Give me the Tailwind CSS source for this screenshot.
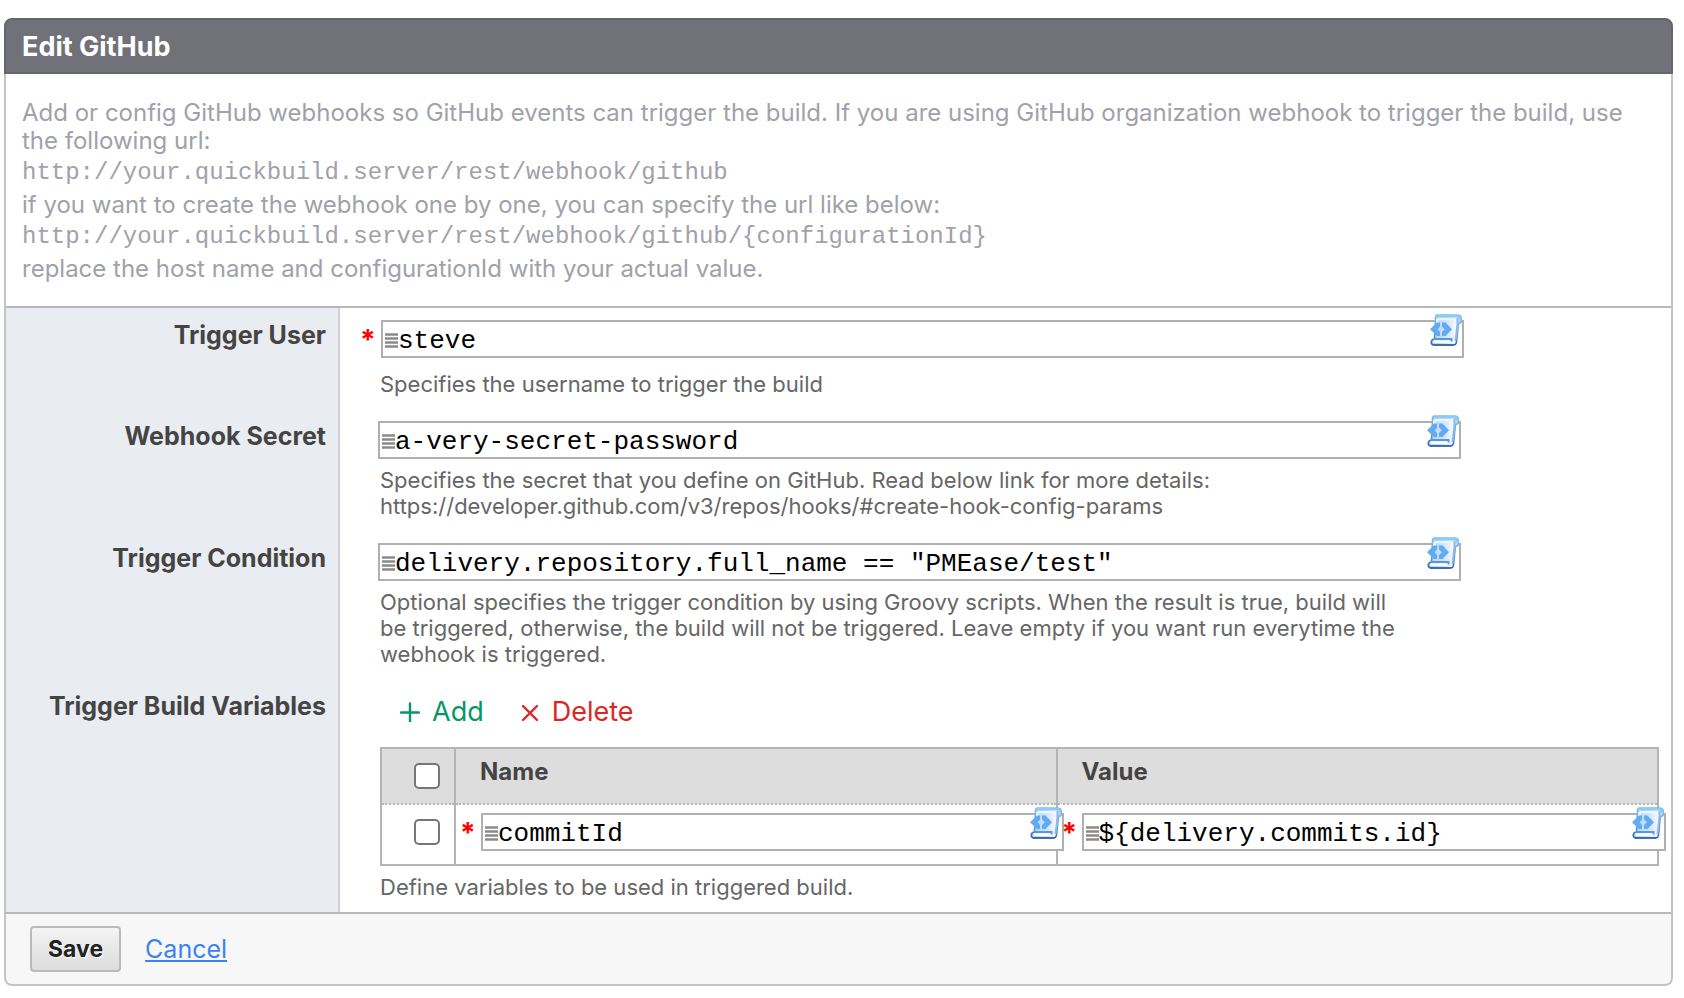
<!DOCTYPE html>
<html lang="en">
<head>
<meta charset="utf-8">
<meta name="viewport" content="width=device-width, initial-scale=1">
<title>Edit GitHub</title>
<script src="https://cdn.jsdelivr.net/npm/@tailwindcss/browser@4"></script>
</head>
<body class="bg-white font-['Inter',sans-serif] text-[#444]">
<svg class="absolute size-0" aria-hidden="true">
  <defs>
    <linearGradient id="paper" x1="0" y1="0" x2="1" y2="0">
      <stop offset="0" stop-color="#a5cff5"/><stop offset=".55" stop-color="#d3e7fc"/><stop offset=".8" stop-color="#f4f9ff"/><stop offset="1" stop-color="#9cc6f2"/>
    </linearGradient>
    <linearGradient id="edge" x1="0" y1="0" x2="0" y2="1">
      <stop offset="0" stop-color="#79c0ee"/><stop offset=".6" stop-color="#6a9fdc"/><stop offset="1" stop-color="#3463a6"/>
    </linearGradient>
    <symbol id="script" viewBox="0 0 32 32">
      <path d="M7 1h20.500c2.800 0 4.200 2 4.200 4.500S30.500 9.500 28.500 9.500L26.500 28c-.3 2-1.300 3-3 3H4c-2 0-3-1.500-2.700-3.200S3 25 4.500 25L5.500 4C5.600 2 6 1 7 1z" fill="url(#paper)" stroke="url(#edge)" stroke-width="1.600"/>
      <path d="M7.500 5h17M7.500 5v4" fill="none" stroke="#eaf5fe" stroke-width="2.500"/>
      <path d="M7 2.200h20c2 0 3.300 1.300 3.300 3.300" fill="none" stroke="#8cccf4" stroke-width="2.400"/>
      <path d="M27.500 4v6l-2 17" fill="none" stroke="#8fb9ea" stroke-width="2"/>
      <path d="M3.500 26.300h17.500v2.700H3.500z" fill="#fff"/>
      <path d="M4 25h17.500v2.500" fill="none" stroke="#5a97de" stroke-width="2"/>
      <path d="M3 31h21" stroke="#3a68a8" stroke-width="1.600"/>
      <path d="M0 15.300L7 8.500h3v4l-2.500 2.800L10 18v4H7zM12 8.500h3.500l6.500 6.800-6.500 6.700H12v-4l2.800-2.700L12 12.500z" fill="#62aaf2"/>
    </symbol>
    <symbol id="grip" viewBox="0 0 13 16">
      <path d="M0 1.500h13M0 5.500h13M0 9.500h13M0 13.500h13" stroke="#8a8a8a" stroke-width="2.400"/>
    </symbol>
  </defs>
</svg>

<form class="mt-[18px] mr-[11px] ml-1">
  <h1 class="flex h-14 items-center rounded-t-lg border-2 border-[#65656b] bg-[#71717a] px-4 pt-0.5 text-[27px] font-bold text-white">Edit GitHub</h1>

  <div class="border-x-2 border-[#c4c4c4]">
    <div class="border-b-2 border-[#b9b9b9] px-4 pt-[25px] pb-[21px] text-[24px] leading-8 text-[#a1a1aa]">
      <p class="mb-0.5 leading-7">Add or config GitHub webhooks so GitHub events can trigger the build. If you are using GitHub organization webhook to trigger the build, use the following url:</p>
      <code class="block font-['Liberation_Mono',monospace]">http://your.quickbuild.server/rest/webhook/github</code>
      <p>if you want to create the webhook one by one, you can specify the url like below:</p>
      <code class="block font-['Liberation_Mono',monospace]">http://your.quickbuild.server/rest/webhook/github/{configurationId}</code>
      <p>replace the host name and configurationId with your actual value.</p>
    </div>

    <div class="grid grid-cols-[334px_minmax(0,1fr)]">
      <label for="user" class="border-r-2 border-[#d0d0d5] bg-[#e9ecf1] pt-3 pr-3 text-right text-[25px] leading-[30px] font-bold">Trigger User</label>
      <div class="pt-3 pb-3">
        <div class="flex pl-5">
          <span class="w-[21px] pt-1.5 text-[28px] leading-7 font-bold text-[#f00]">*</span>
          <div class="relative w-full max-w-[1083px]">
            <input id="user" value="steve" class="block h-[38px] w-full border-2 border-[#b0b0b0] bg-white pt-[5px] pl-[15px] font-['Liberation_Mono',monospace] text-[26px] text-black">
            <svg class="absolute top-[13px] left-1 h-4 w-[13px]"><use href="#grip"/></svg>
            <button type="button" aria-label="Insert script" class="absolute -top-1.5 right-0.5"><svg class="size-8"><use href="#script"/></svg></button>
          </div>
        </div>
        <p class="mt-[13px] pl-10 text-[22px] leading-[26px] text-[#666]">Specifies the username to trigger the build</p>
      </div>

      <label for="secret" class="border-r-2 border-[#d0d0d5] bg-[#e9ecf1] pt-3 pr-3 text-right text-[25px] leading-[30px] font-bold">Webhook Secret</label>
      <div class="pt-3 pb-3">
        <div class="flex pl-[38px]">
          <div class="relative w-full max-w-[1083px]">
            <input id="secret" value="a-very-secret-password" class="block h-[38px] w-full border-2 border-[#b0b0b0] bg-white pt-[5px] pl-[15px] font-['Liberation_Mono',monospace] text-[26px] text-black">
            <svg class="absolute top-[13px] left-1 h-4 w-[13px]"><use href="#grip"/></svg>
            <button type="button" aria-label="Insert script" class="absolute -top-1.5 right-0.5"><svg class="size-8"><use href="#script"/></svg></button>
          </div>
        </div>
        <p class="mt-2 pl-10 text-[22px] leading-[26px] text-[#666]">Specifies the secret that you define on GitHub. Read below link for more details:<br>https://developer.github.com/v3/repos/hooks/#create-hook-config-params</p>
      </div>

      <label for="condition" class="border-r-2 border-[#d0d0d5] bg-[#e9ecf1] pt-3 pr-3 text-right text-[25px] leading-[30px] font-bold">Trigger Condition</label>
      <div class="pt-3 pb-3">
        <div class="flex pl-[38px]">
          <div class="relative w-full max-w-[1083px]">
            <input id="condition" value="delivery.repository.full_name == &quot;PMEase/test&quot;" class="block h-[38px] w-full border-2 border-[#b0b0b0] bg-white pt-[5px] pl-[15px] font-['Liberation_Mono',monospace] text-[26px] text-black">
            <svg class="absolute top-[13px] left-1 h-4 w-[13px]"><use href="#grip"/></svg>
            <button type="button" aria-label="Insert script" class="absolute -top-1.5 right-0.5"><svg class="size-8"><use href="#script"/></svg></button>
          </div>
        </div>
        <p class="mt-2 pl-10 text-[22px] leading-[26px] text-[#666]">Optional specifies the trigger condition by using Groovy scripts. When the result is true, build will<br>be triggered, otherwise, the build will not be triggered. Leave empty if you want run everytime the<br>webhook is triggered.</p>
      </div>

      <div class="border-r-2 border-[#d0d0d5] bg-[#e9ecf1] pt-3 pr-3 text-right text-[25px] leading-[30px] font-bold">Trigger Build Variables</div>
      <div class="pt-[15px] pr-3 pb-3 pl-10">
        <div class="flex gap-9 pl-5 text-[27px] leading-9">
          <button type="button" class="flex items-center gap-3 text-[#059669]"><svg class="size-5" viewBox="0 0 20 20"><path d="M10 1.500v18M1 10.500h18" stroke="currentColor" stroke-width="2.400" stroke-linecap="round"/></svg>Add</button>
          <button type="button" class="flex items-center gap-3 text-[#dc2626]"><svg class="size-5" viewBox="0 0 20 20"><path d="M3 4l14 14M17 4L3 18" stroke="currentColor" stroke-width="2.400" stroke-linecap="round"/></svg>Delete</button>
        </div>
        <table class="mt-[17px] w-full table-fixed border-collapse border-2 border-[#b4b4b4]">
          <colgroup><col class="w-[74px]"><col><col></colgroup>
          <thead>
            <tr class="h-14 border-b-2 border-dotted border-[#b4b4b4] bg-[#ddd] text-left align-top text-[24px] leading-7">
              <th class="border-x-2 border-x-[#b4b4b4] [border-left-style:solid] [border-right-style:solid]"><input type="checkbox" aria-label="Select all" class="mt-3.5 ml-8 block size-[26px] appearance-none rounded-[5px] border-2 border-[#767676] bg-white"></th>
              <th class="border-r-2 border-r-[#b4b4b4] pt-[9px] pl-6 [border-right-style:solid]">Name</th>
              <th class="border-r-2 border-r-[#b4b4b4] pt-[9px] pl-6 [border-right-style:solid]">Value</th>
            </tr>
          </thead>
          <tbody>
            <tr class="h-[61px] align-top">
              <td class="border-r-2 border-[#b4b4b4]"><input type="checkbox" aria-label="Select commitId" class="mt-3.5 ml-8 block size-[26px] appearance-none rounded-[5px] border-2 border-[#767676] bg-white"></td>
              <td class="border-r-2 border-[#b4b4b4] pt-2">
                <div class="-mr-2 flex pl-1">
                  <span class="w-[21px] pt-1.5 text-[28px] leading-7 font-bold text-[#f00]">*</span>
                  <div class="relative flex-1">
                    <input aria-label="Name" value="commitId" class="block h-[38px] w-full border-2 border-[#b0b0b0] bg-white pt-[5px] pl-[15px] font-['Liberation_Mono',monospace] text-[26px] text-black">
                    <svg class="absolute top-[13px] left-1 h-4 w-[13px]"><use href="#grip"/></svg>
                    <button type="button" aria-label="Insert script" class="absolute -top-1.5 right-0.5"><svg class="size-8"><use href="#script"/></svg></button>
                  </div>
                </div>
              </td>
              <td class="pt-2">
                <div class="-mr-[9px] flex pl-1">
                  <span class="z-10 w-5 pt-1.5 text-[28px] leading-7 font-bold text-[#f00]">*</span>
                  <div class="relative flex-1">
                    <input aria-label="Value" value="${delivery.commits.id}" class="block h-[38px] w-full border-2 border-[#b0b0b0] bg-white pt-[5px] pl-[15px] font-['Liberation_Mono',monospace] text-[26px] text-black">
                    <svg class="absolute top-[13px] left-1 h-4 w-[13px]"><use href="#grip"/></svg>
                    <button type="button" aria-label="Insert script" class="absolute -top-1.5 right-0.5"><svg class="size-8"><use href="#script"/></svg></button>
                  </div>
                </div>
              </td>
            </tr>
          </tbody>
        </table>
        <p class="mt-2 text-[22px] leading-[26px] text-[#666]">Define variables to be used in triggered build.</p>
      </div>
    </div>
  </div>

  <div class="flex items-center gap-6 rounded-b-lg border-2 border-[#c4c4c4] border-t-[#b9b9b9] bg-[#f7f7f7] px-6 py-3">
    <button type="submit" class="h-[46px] rounded border-2 border-[#bbb] bg-linear-to-b from-[#f4f4f4] to-[#dcdcdc] px-4 text-[23px] font-bold text-[#222] text-shadow-[1px_1px_0_#fff]">Save</button>
    <a href="#" class="text-[25px] leading-8 text-[#3b82f6] underline">Cancel</a>
  </div>
</form>
</body>
</html>
